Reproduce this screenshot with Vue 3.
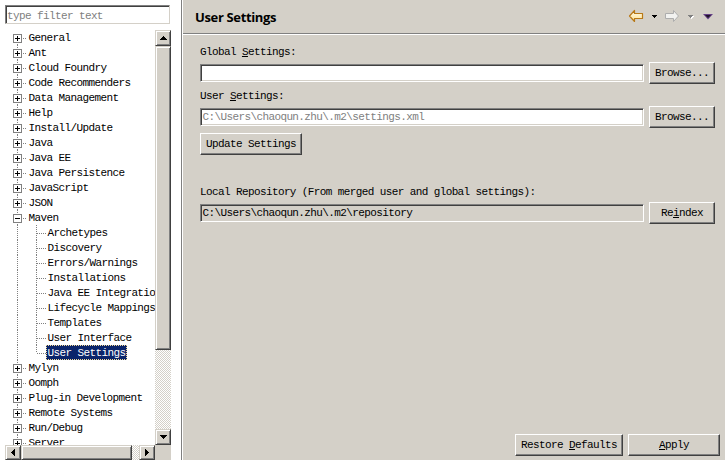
<script setup>
const children = ['Archetypes', 'Discovery', 'Errors/Warnings', 'Installations', 'Java EE Integration', 'Lifecycle Mappings', 'Templates', 'User Interface', 'User Settings']
const names = ['General', 'Ant', 'Cloud Foundry', 'Code Recommenders', 'Data Management', 'Help', 'Install/Update', 'Java', 'Java EE', 'Java Persistence', 'JavaScript', 'JSON', 'Maven', 'Mylyn', 'Oomph', 'Plug-in Development', 'Remote Systems', 'Run/Debug', 'Server']
const rows = names.flatMap(name => [
  { name, open: name === 'Maven' },
  ...(name === 'Maven' ? children.map(c => ({ name: c, child: true, selected: c === 'User Settings' })) : [])
])
</script>

<template>
  <div class="window">
    <aside class="side">
      <div class="filter">type filter text</div>
      <div class="browser">
        <div class="tree">
          <div v-for="(row, i) in rows" :key="row.name" class="row">
            <svg class="branch" :width="row.child ? 41 : 23" height="15" shape-rendering="crispEdges">
              <path :d="i === 0 ? 'M12.5 8V15' : 'M12.5 0V15'" class="dots" />
              <template v-if="row.child">
                <path :d="row.selected ? 'M31.5 0V8' : 'M31.5 0V15'" class="dots" />
                <path d="M32 8.5H41" class="dots" />
              </template>
              <template v-else>
                <path d="M18 8.5H22" class="dots" />
                <rect x="8.5" y="4.5" width="8" height="8" fill="#fff" stroke="#808080" />
                <path d="M10 8.5H15" stroke="#000" />
                <path v-if="!row.open" d="M12.5 6V11" stroke="#000" />
              </template>
            </svg>
            <span class="name" :class="{ child: row.child, selected: row.selected }">{{ row.name }}</span>
          </div>
        </div>
        <div class="vbar">
          <div class="raised arrow"><svg width="7" height="4" shape-rendering="crispEdges"><path d="M3 0h1v1h1v1h1v1h1v1H0V3h1V2h1V1h1z" /></svg></div>
          <div class="raised vthumb"></div>
          <div class="track"></div>
          <div class="raised arrow"><svg width="7" height="4" shape-rendering="crispEdges"><path d="M0 0h7v1H6v1H5v1H4v1H3V3H2V2H1V1H0z" /></svg></div>
        </div>
        <div class="hbar">
          <div class="raised arrow"><svg width="4" height="7" shape-rendering="crispEdges"><path d="M4 0v7H3V6H2V5H1V4H0V3h1V2h1V1h1V0z" /></svg></div>
          <div class="raised hthumb"></div>
          <div class="track"></div>
          <div class="raised arrow"><svg width="4" height="7" shape-rendering="crispEdges"><path d="M0 0h1v1h1v1h1v1h1v1H3v1H2v1H1v1H0z" /></svg></div>
        </div>
        <div class="corner"></div>
      </div>
    </aside>

    <main class="page">
      <header class="head">
        <h1>User Settings</h1>
        <svg class="nav" width="90" height="16" viewBox="0 0 90 16">
          <defs>
            <linearGradient id="gold" x1="0" y1="0" x2="0" y2="1"><stop offset="0" stop-color="#fffdf0" /><stop offset="1" stop-color="#ffe08a" /></linearGradient>
          </defs>
          <path d="M1.500 8L6.500 2.500V5.500H14.500V10.500H6.500V13.500Z" fill="url(#gold)" stroke="#b87917" stroke-width="1.200" stroke-linejoin="round" />
          <path d="M24 7h5v1h-1v1h-1v1h-1V9h-1V8h-1z" fill="#000" shape-rendering="crispEdges" />
          <path d="M50.500 8L45.500 2.500V5.500H37.500V10.500H45.500V13.500Z" fill="#f2f2f0" stroke="#adadad" stroke-linejoin="round" />
          <path d="M61 8h5v1h-1v1h-1v1h-1v-1h-1V9h-1z" fill="#fff" shape-rendering="crispEdges" />
          <path d="M60 7h5v1h-1v1h-1v1h-1V9h-1V8h-1z" fill="#808080" shape-rendering="crispEdges" />
          <path d="M75 6H85L80 11.500Z" fill="#654087" /><path d="M77 7H83L80 10Z" fill="#21142b" />
        </svg>
      </header>

      <section class="form">
        <div class="label">Global <u>S</u>ettings:</div>
        <div class="line"><div class="field"></div><button class="button">Browse...</button></div>
        <div class="label second">User <u>S</u>ettings:</div>
        <div class="line"><div class="field muted">C:\Users\chaoqun.zhu\.m2\settings.xml</div><button class="button">Browse...</button></div>
        <button class="button update">Update Settings</button>
        <div class="label third">Local Repository (From merged user and global settings):</div>
        <div class="line"><div class="field readonly">C:\Users\chaoqun.zhu\.m2\repository</div><button class="button">Re<u>i</u>ndex</button></div>
      </section>

      <footer class="foot">
        <button class="button restore">Restore <u>D</u>efaults</button>
        <button class="button apply"><u>A</u>pply</button>
      </footer>
    </main>
  </div>
</template>

<style>
body { margin: 0; overflow: hidden; }
</style>

<style scoped>
* { box-sizing: border-box; }
.window { display: flex; width: 725px; height: 460px; overflow: hidden; background: #d4d0c8; color: #000; font: 11px/15px "Liberation Mono", monospace; letter-spacing: -0.61px; white-space: pre; }
.side { width: 183px; height: 460px; padding: 5px 0 0 5px; background: #fff; border-right: 1px solid #fff; box-shadow: inset -1px 0 #808080; flex: none; }
.filter { width: 165px; height: 19px; padding: 3px 1px 0; border: 1px solid; border-color: #808080 #d4d0c8 #d4d0c8 #808080; box-shadow: inset 1px 1px #404040; color: #808080; line-height: 14px; }
.browser { display: grid; grid-template: 415px 15px / 150px 16px; margin-top: 6px; }
.tree { overflow: hidden; }
.row { display: flex; height: 15px; }
.branch { flex: none; display: block; }
.dots { stroke: #808080; stroke-dasharray: 1 1; fill: none; }
.name { height: 15px; padding: 1px 1px 0 0.6px; line-height: 15px; }
.child { padding-left: 1.500px; }
.selected { background: #0a246a; color: #fff; outline: 1px dotted #f5db95; outline-offset: -1px; padding-right: 2px; }
.raised { border: 1px solid; border-color: #d4d0c8 #404040 #404040 #d4d0c8; box-shadow: inset 1px 1px #fff, inset -1px -1px #808080; background: #d4d0c8; flex: none; }
.arrow { display: flex; align-items: center; justify-content: center; width: 16px; height: 16px; }
.vbar { display: flex; flex-direction: column; }
.vthumb { height: 304px; }
.track { flex: 1; background: repeating-conic-gradient(#d4d0c8 0 25%, #fff 0 50%) 0 0 / 2px 2px; }
.hbar { display: flex; height: 15px; }
.hbar .arrow { height: 15px; }
.hthumb { width: 111px; height: 15px; }
.corner { background: #d4d0c8; }
.page { flex: 1; display: flex; flex-direction: column; height: 460px; }
.head { display: flex; align-items: center; justify-content: space-between; height: 35px; padding: 0 7px 1px 12px; border-bottom: 1px solid #fff; box-shadow: inset 0 -1px #808080; }
h1 { margin: 0; font: bold 13px/20px "Open Sans", sans-serif; letter-spacing: -0.35px; }
.nav { display: block; margin-top: -1px; }
.form { padding: 9px 10px 0 17px; flex: 1; }
.label { height: 18px; line-height: 17px; }
.line { display: flex; align-items: center; gap: 5px; height: 22px; }
.second { margin-top: 4px; }
.field { width: 444px; height: 18px; border: 1px solid; border-color: #808080 #fff #fff #808080; box-shadow: inset 1px 1px #404040, inset -1px -1px #d4d0c8; background: #fff; padding: 1px 1.500px; line-height: 15px; }
.muted { color: #808080; }
.readonly { background: #d4d0c8; }
.button { display: block; width: 66px; height: 22px; margin: 0; padding: 0; border: 1px solid; border-color: #fff #404040 #404040 #fff; border-radius: 0; box-shadow: inset -1px -1px #808080; background: #d4d0c8; color: #000; font: inherit; letter-spacing: inherit; line-height: 20px; text-align: center; }
.update { width: 102px; margin-top: 5px; }
.third { margin-top: 29px; }
.foot { display: flex; justify-content: flex-end; gap: 5px; height: 26px; padding-right: 5px; }
.restore { width: 108px; }
.apply { width: 92px; }
u { text-underline-offset: 1px; text-decoration-thickness: 1px; }
</style>
